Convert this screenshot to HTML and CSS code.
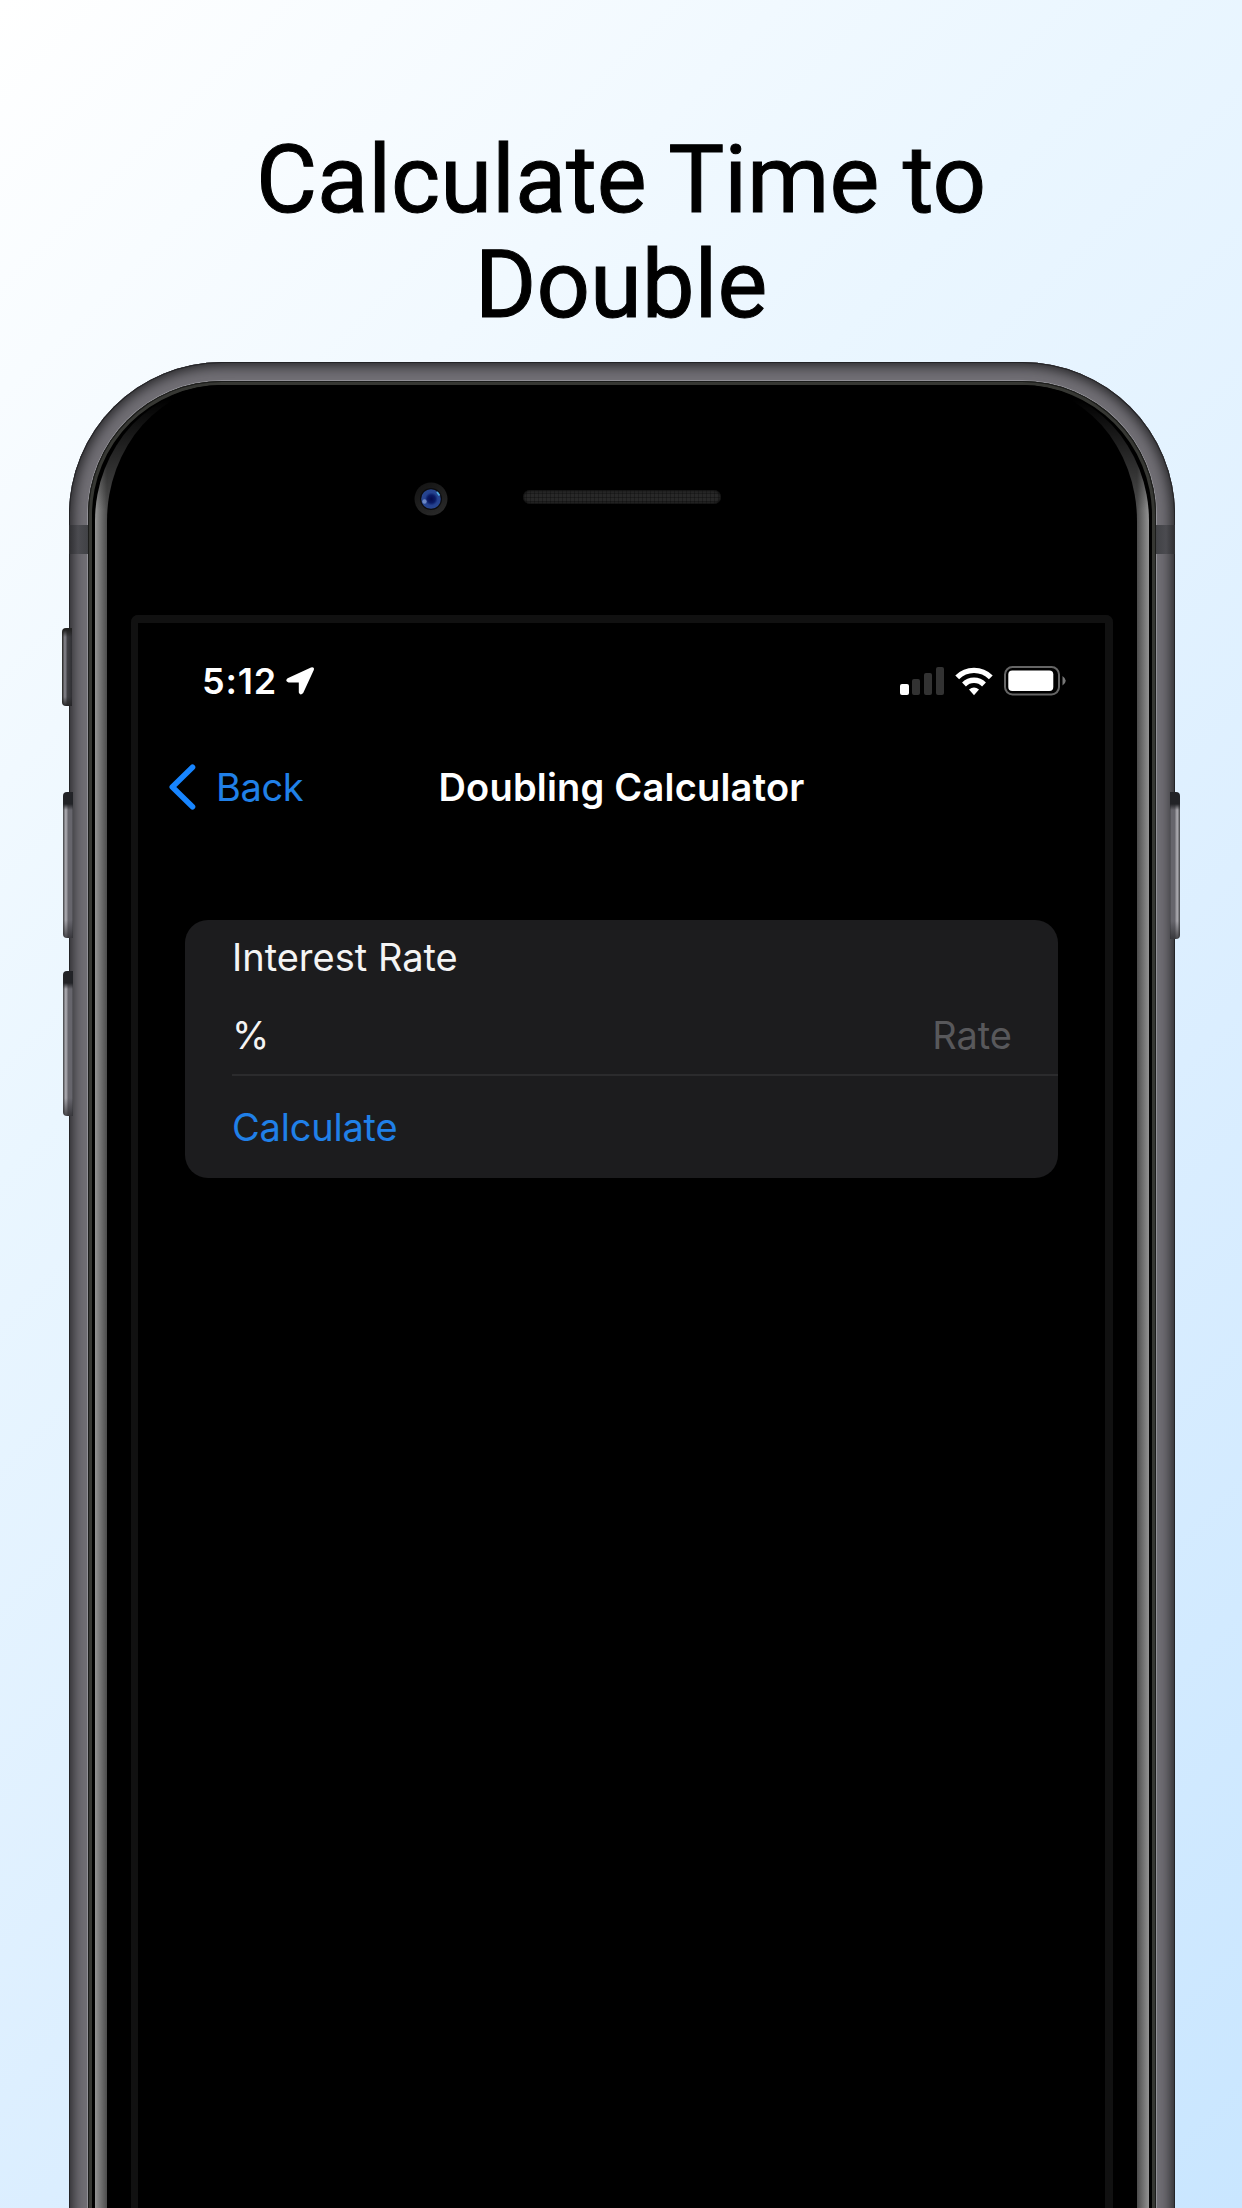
FILE: index.html
```html
<!DOCTYPE html>
<html lang="en">
<head>
<meta charset="utf-8">
<title>Doubling Calculator</title>
<link rel="stylesheet" href="styles.css">
</head>
<body>
<main class="poster">
  <h1 class="headline">Calculate Time to<br>Double</h1>
  <div class="device">
    <span class="key key-mute"></span>
    <span class="key key-up"></span>
    <span class="key key-down"></span>
    <span class="key key-power"></span>
    <div class="frame">
      <span class="antenna antenna-left"></span>
      <span class="antenna antenna-right"></span>
      <div class="rim">
        <div class="edge">
          <div class="glass">
            <div class="sensors">
              <svg class="camera" width="34" height="34" viewBox="0 0 34 34">
                <defs>
                  <linearGradient id="ring" x1="0" y1="0" x2=".6" y2="1"><stop offset="0" stop-color="#121212"/><stop offset="1" stop-color="#282828"/></linearGradient>
                  <radialGradient id="lens" cx=".52" cy=".5" r=".5"><stop offset="0" stop-color="#04094a"/><stop offset=".4" stop-color="#0a1a63"/><stop offset=".65" stop-color="#24418f"/><stop offset="1" stop-color="#27468f"/></radialGradient>
                </defs>
                <circle cx="17" cy="17" r="16.5" fill="url(#ring)"/>
                <circle cx="17" cy="17" r="11" fill="#0c0c0e"/>
                <circle cx="17" cy="17" r="9.8" fill="url(#lens)"/>
                <circle cx="10.5" cy="19.5" r="2.2" fill="#8aa5dc" opacity=".7"/>
                <path d="M23 10l2.5 3.5" stroke="#4fa6dc" stroke-width="1.8"/>
              </svg>
              <span class="speaker"></span>
            </div>
            <div class="screen">
              <div class="status">
                <span class="time">5:12</span>
                <svg class="location" width="30" height="30" viewBox="0 0 30 30"><path d="M2.6 12.2L26 1.4Q29.8.6 28.8 4L18.2 27Q15.4 30.2 13.8 26.5V16.4H3.6Q-.6 15 2.6 12.2z" fill="#fff"/></svg>
                <svg class="signal" width="44" height="28" viewBox="0 0 44 28"><rect y="17" width="9" height="11" rx="2" fill="#fff"/><rect x="12" y="12" width="8" height="16" rx="2" fill="#323232"/><rect x="24" y="6" width="8" height="22" rx="2" fill="#323232"/><rect x="36" width="8" height="28" rx="2" fill="#323232"/></svg>
                <svg class="wifi" width="38" height="29" viewBox="0 0 38 29"><g fill="none" stroke="#fff" stroke-width="5.4"><path d="M2.2 10.3a23.8 23.8 0 0 1 33.6 0"/><path d="M9 17.5a14 14 0 0 1 20 0"/></g><path d="M14 22.5q5-3.8 10 0l-5 5.7z" fill="#fff"/></svg>
                <svg class="battery" width="62" height="30" viewBox="0 0 62 30"><rect x="1" y="1" width="54" height="27.5" rx="7.5" fill="none" stroke="#656565" stroke-width="2"/><rect x="4.3" y="4.5" width="45" height="20.5" rx="4" fill="#fff"/><path d="M58.5 10q6.5 4.8 0 9.5z" fill="#777"/></svg>
              </div>
              <div class="navbar">
                <a class="back"><svg class="chevron" width="28" height="46" viewBox="0 0 28 46"><path d="M24.5 3.2L4.3 23l20.2 19.8" fill="none" stroke="#1785ff" stroke-width="5.6" stroke-linecap="round" stroke-linejoin="round"/></svg><span class="back-label">Back</span></a>
                <span class="title">Doubling Calculator</span>
                <span></span>
              </div>
              <section class="card">
                <div class="label">Interest Rate</div>
                <div class="field"><span>%</span><span class="placeholder">Rate</span></div>
                <div class="action">Calculate</div>
              </section>
            </div>
          </div>
        </div>
      </div>
    </div>
  </div>
</main>
</body>
</html>
```
FILE: styles.css
```css
* { box-sizing: border-box; }
body { margin: 0; }
.poster {
  width: 1242px;
  height: 2208px;
  overflow: hidden;
  display: flex;
  flex-direction: column;
  align-items: center;
  background: linear-gradient(135deg, #fff 0%, #eaf6ff 34%, #dbeeff 65%, #c9e6ff 100%);
  font-family: Inter, "Liberation Sans", sans-serif;
}
.headline {
  margin: 0;
  padding-top: 128px;
  height: 362px;
  flex: none;
  font: 400 94px/105px Roboto, sans-serif;
  -webkit-text-stroke: 1px #000;
  text-align: center;
  color: #000;
}

/* Handset */
.device { position: relative; flex: none; width: 1106px; height: 2240px; margin-left: 2px; }
.frame {
  position: relative;
  height: 100%;
  padding: 19px;
  border-radius: 153px;
  background: #77757b;
  box-shadow: inset 0 0 0 1px #242427, inset 0 0 14px 3px #1b1b1d, inset 0 0 0 18px #716f75, inset 0 0 0 19px #929197;
}
.rim {
  height: 100%;
  padding: 4px 7px;
  border-radius: 134px;
  background: #000;
  box-shadow: inset 0 0 0 1px #1b1c1a, inset 0 0 0 4px #363733;
}
.edge {
  height: 100%;
  padding: 0 12px;
  border-radius: 127px / 136px;
  background:
    linear-gradient(#000 14px, transparent 125px),
    linear-gradient(90deg, #939393, #4c4c4c 12px, #4c4c4c 70px, #000 100px, #000 954px, #4c4c4c 984px, #4c4c4c 1042px, #939393);
}
.glass {
  height: 100%;
  border-radius: 122px / 136px;
  background: #000;
  display: flex;
  flex-direction: column;
  align-items: center;
}
.antenna {
  position: absolute;
  top: 163px;
  width: 19px;
  height: 29px;
  background: linear-gradient(90deg, #2e2e31, #4b4b50 9px, #414246);
}
.antenna-left { left: 0; }
.antenna-right { right: 0; transform: scaleX(-1); }
.key {
  position: absolute;
  z-index: 1;
  left: -6px;
  width: 10px;
  border-radius: 4px 0 0 4px;
  background:
    linear-gradient(#222327 12px, transparent 18px, transparent calc(100% - 18px), rgba(45, 45, 49, .8) 100%),
    linear-gradient(90deg, #55565a 1px, #aaa9af 2px, #99989e 4px, #66656c 5px, #66656c 9px, #414145);
}
.key-mute {
  top: 266px;
  left: -7px;
  height: 78px;
  background:
    linear-gradient(#222 2px, transparent 9px, transparent calc(100% - 9px), #252527),
    linear-gradient(90deg, #333 1px, #7d7c82 2px, #77767d 4px, #414145 5px, #303034);
}
.key-up { top: 430px; height: 146px; }
.key-down { top: 609px; height: 145px; }
.key-power { top: 430px; left: auto; right: -5px; height: 147px; transform: scaleX(-1); }

.sensors {
  flex: none;
  display: flex;
  align-items: center;
  width: 982px;
  height: 230px;
  padding: 0 0 2px 283px;
}
.speaker {
  width: 198px;
  height: 14px;
  margin: -4px 0 0 75px;
  border-radius: 7px;
  background:
    repeating-linear-gradient(90deg, transparent 0 3px, rgba(0, 0, 0, .25) 3px 4px),
    repeating-linear-gradient(#282828 0 3px, #1d1d1d 3px 4px);
  box-shadow: inset 0 0 2px 1px #111;
}

/* App screen */
.screen {
  width: 982px;
  flex: 1;
  border: 8px solid #111;
  border-width: 8px 8px 0 7px;
  border-radius: 7px 7px 0 0;
  background: #000;
  color: #fff;
  font-size: 38px;
}
.status { display: flex; align-items: center; height: 116px; padding: 0 39px 0 64px; }
.time { font-size: 36px; font-weight: 600; letter-spacing: .8px; width: 73px; white-space: nowrap; }
.location { margin-left: 10px; }
.signal { margin-left: auto; }
.wifi { margin-left: 11px; }
.battery { margin-left: 11px; }
.navbar {
  display: grid;
  grid-template-columns: 1fr auto 1fr;
  align-items: center;
  height: 95px;
}
.back { display: flex; align-items: center; padding-left: 30px; gap: 20px; color: #2080e8; }
.back-label { letter-spacing: -.4px; }
.title { font-weight: 600; white-space: nowrap; letter-spacing: .2px; }
.card {
  margin: 86px 47px 0;
  height: 258px;
  border-radius: 23px;
  background: #1c1c1e;
  color: #f4f4f4;
}
.label { height: 75px; padding-left: 47px; line-height: 75px; }
.field {
  display: flex;
  justify-content: space-between;
  height: 81px;
  margin-left: 47px;
  padding-right: 46px;
  border-bottom: 2px solid #2b2b2d;
  line-height: 81px;
}
.placeholder { color: #58585b; }
.action { height: 102px; padding-left: 47px; line-height: 102px; color: #2080e8; letter-spacing: -.2px; }
```
